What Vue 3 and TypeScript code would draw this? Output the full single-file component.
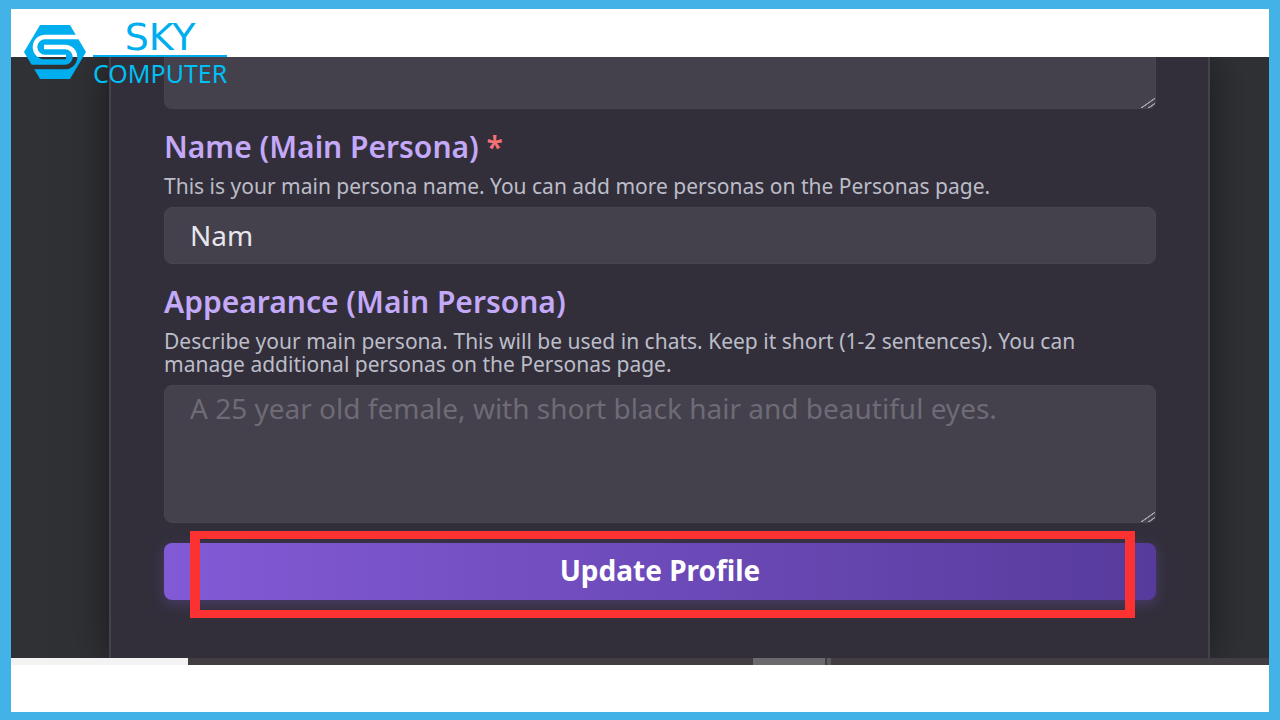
<script setup lang="ts">
import { ref } from 'vue'

const bio = ref('')
const name = ref('Nam')
const appearance = ref('')
</script>

<template>
  <div class="frame">
    <header class="masthead">
      <a class="brand" href="#" aria-label="Sky Computer">
        <svg class="mark" viewBox="0 0 64 56" aria-hidden="true">
          <mask id="grooves" maskUnits="userSpaceOnUse" x="0" y="0" width="64" height="56">
            <rect width="64" height="56" fill="#fff" />
            <g fill="none" stroke="#000" stroke-width="4.6">
              <path d="M60 13H22a10 10 0 0 0 0 20H43" />
              <path d="M4 43H42a10 10 0 0 0 0-20H21" />
            </g>
          </mask>
          <path fill="#00aeef" mask="url(#grooves)" d="M17 1H47L63 28L47 55H17L1 28Z" />
        </svg>
        <span class="words">
          <span class="sky">SKY</span>
          <span class="computer">COMPUTER</span>
        </span>
      </a>
    </header>

    <main class="stage">
      <form class="panel" @submit.prevent>
        <textarea v-model="bio" class="field bio" aria-label="Bio"></textarea>

        <label class="title" for="name">Name (Main Persona) <span class="required">*</span></label>
        <p class="hint">This is your main persona name. You can add more personas on the Personas page.</p>
        <input id="name" v-model="name" class="field name" type="text" />

        <label class="title" for="appearance">Appearance (Main Persona)</label>
        <p class="hint">Describe your main persona. This will be used in chats. Keep it short (1-2 sentences). You can manage additional personas on the Personas page.</p>
        <textarea
          id="appearance"
          v-model="appearance"
          class="field appearance"
          placeholder="A 25 year old female, with short black hair and beautiful eyes."
        ></textarea>

        <div class="action">
          <button class="submit" type="submit">Update Profile</button>
          <span class="highlight"></span>
        </div>
      </form>
    </main>

    <div class="taskbar">
      <span class="search"></span>
      <span class="task"></span>
      <span class="divider"></span>
    </div>
  </div>
</template>

<style>
body {
  margin: 0;
}
</style>

<style scoped>
.frame {
  box-sizing: border-box;
  min-height: 100vh;
  display: flex;
  flex-direction: column;
  padding: 9px 11px 8px;
  background: linear-gradient(#fff, #fff) content-box, #43b3e7;
  font-family: "Noto Sans", "Open Sans", sans-serif;
}

.masthead {
  position: relative;
  height: 48px;
}

.brand {
  position: absolute;
  z-index: 1;
  top: 15px;
  left: 12px;
  display: flex;
  gap: 6px;
  color: #00aeef;
  text-decoration: none;
}

.mark {
  width: 64px;
  height: 56px;
}

.words {
  display: flex;
  flex-direction: column;
}

.sky {
  height: 31px;
  border-bottom: 2px solid #00aeef;
  font: 38px/26px "DejaVu Sans", sans-serif;
  text-align: center;
}

.computer {
  color: #00bff3;
  font-size: 25px;
  font-weight: 400;
  line-height: 32px;
}

.stage {
  padding: 0 59px 0 98px;
  background: #303135;
  overflow: hidden;
}

.panel {
  display: flex;
  flex-direction: column;
  padding: 0 52px 58px 53px;
  border: solid #45424e;
  border-width: 0 2px;
  background: #322f3b;
  box-shadow: 0 0 40px rgba(0, 0, 0, 0.5);
}

.field {
  box-sizing: border-box;
  width: 100%;
  margin: 0;
  padding: 0 25px 2px;
  border: 1px solid #484550;
  border-radius: 8px;
  outline: 0;
  background: #44414c;
  color: #e8e6ed;
  font-family: inherit;
  font-size: 28px;
}

.field::-webkit-resizer {
  background: linear-gradient(
    145deg,
    transparent 58%,
    #a5a3aa 60%,
    #a5a3aa 64%,
    transparent 66%,
    transparent 78%,
    #a5a3aa 80%,
    #a5a3aa 84%,
    transparent 86%
  );
}

.bio {
  height: 52px;
  border-top: 0;
  border-radius: 0 0 8px 8px;
}

.name {
  height: 57px;
}

.appearance {
  height: 138px;
  padding-top: 6px;
  line-height: 32px;
}

.appearance::placeholder {
  color: #6e6b76;
  opacity: 1;
}

.title {
  margin: 23px 0 13px;
  color: #c4a9f8;
  font-size: 30px;
  font-weight: 600;
  line-height: 30px;
}

.required {
  color: #f47174;
}

.hint {
  margin: 0 0 9px;
  color: #bcbdc8;
  font-size: 21px;
  line-height: 23px;
}

.action {
  position: relative;
  margin-top: 20px;
}

.submit {
  display: block;
  width: 100%;
  height: 57px;
  padding: 0 0 4px;
  border: 0;
  border-radius: 8px;
  background: linear-gradient(90deg, #835ad6, #573b9c);
  box-shadow: 0 4px 14px rgba(128, 90, 213, 0.3);
  color: #fff;
  font-family: inherit;
  font-size: 28px;
  font-weight: 700;
}

.highlight {
  position: absolute;
  inset: -12px 21px -18px 26px;
  border: solid #fc3131;
  border-width: 8px 10px;
  pointer-events: none;
}

.taskbar {
  display: grid;
  grid-template-columns: 177fr 565fr 72fr 2fr 4fr 438fr;
  height: 7px;
  background: #413d43;
}

.search {
  background: #f3f3f3;
}

.task {
  grid-column: 3;
  background: #6c6a6e;
}

.divider {
  grid-column: 5;
  background: #5b595e;
}
</style>
